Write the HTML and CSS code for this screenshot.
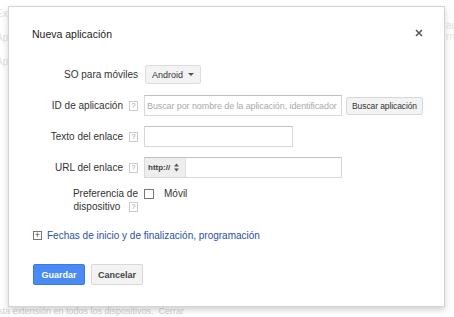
FILE: index.html
```html
<!DOCTYPE html>
<html lang="es">
<head>
  <meta charset="UTF-8">
  <title>Nueva aplicación</title>
  <link rel="stylesheet" href="styles.css">
</head>
<body>
  <div class="page">
    <div class="bg-line">Ext &nbsp; &nbsp; &nbsp; &nbsp; &nbsp; &nbsp; &nbsp; &nbsp; &nbsp; &nbsp; &nbsp; &nbsp; &nbsp; &nbsp; &nbsp; &nbsp; &nbsp; &nbsp; &nbsp; &nbsp; &nbsp; &nbsp; &nbsp; &nbsp; &nbsp; &nbsp; &nbsp; &nbsp; &nbsp; &nbsp; &nbsp; &nbsp; &nbsp; &nbsp; Fecha de inicio &nbsp; Estado</div>
    <div class="bg-line">Ap</div>
    <div class="bg-line">Ap</div>
    <div class="bg-right">ar<br>rru</div>
    <div class="bg-bottom">sta extensión en todos los dispositivos. &nbsp;Cerrar</div>
  </div>

  <div class="dialog">
    <div class="dialog-head">
      <span class="dialog-title">Nueva aplicación</span>
      <svg class="close" width="8" height="8" viewBox="0 0 8 8">
        <path d="M1 1L7 7M7 1L1 7" stroke="#555" stroke-width="1.5"/>
      </svg>
    </div>

    <div class="form">
      <div class="label">SO para móviles</div>
      <div class="field">
        <span class="dropdown">Android <span class="caret"></span></span>
      </div>

      <div class="label">ID de aplicación <span class="help">?</span></div>
      <div class="field">
        <input class="input wide" placeholder="Buscar por nombre de la aplicación, identificador">
        <button class="btn small">Buscar aplicación</button>
      </div>

      <div class="label">Texto del enlace <span class="help">?</span></div>
      <div class="field">
        <input class="input mid">
      </div>

      <div class="label">URL del enlace <span class="help">?</span></div>
      <div class="field">
        <div class="url">
          <span class="proto">http://
            <svg class="spin" width="5" height="9" viewBox="0 0 5 9">
              <path d="M0 3.5L2.5 0.5L5 3.5Z M0 5.5L2.5 8.5L5 5.5Z" fill="#555"/>
            </svg>
          </span>
          <input class="url-input">
        </div>
      </div>

      <div class="label two">Preferencia de<br>dispositivo <span class="help">?</span></div>
      <div class="field top">
        <span class="check"></span> Móvil
      </div>
    </div>

    <div class="expand">
      <span class="plus">+</span>
      <a href="#">Fechas de inicio y de finalización, programación</a>
    </div>

    <div class="actions">
      <button class="btn primary">Guardar</button>
      <button class="btn">Cancelar</button>
    </div>
  </div>
</body>
</html>
```

FILE: styles.css
```css
body {
  margin: 0;
  background: #fff;
  font-family: 'Liberation Sans', Arial, sans-serif;
  color: #222;
  width: 454px;
  height: 317px;
  overflow: hidden;
  position: relative;
}

.page {
  color: #e0e0e0;
  font-size: 10px;
  padding: 2px 0 0 0;
}

.bg-line {
  height: 24px;
  line-height: 24px;
  white-space: nowrap;
  margin-left: -4px;
}

.bg-right {
  position: absolute;
  left: 446px;
  top: 20px;
  line-height: 11px;
  color: #e4e4e4;
}

.bg-bottom {
  position: absolute;
  left: -2px;
  top: 306px;
  white-space: nowrap;
  font-size: 9px;
  color: #d0d0d0;
}

.dialog {
  position: absolute;
  left: 8px;
  top: 6px;
  width: 437px;
  height: 301px;
  box-sizing: border-box;
  background: #fff;
  border: 1px solid #d4d4d4;
  box-shadow: 0 3px 6px rgba(0, 0, 0, 0.18);
  padding: 0 0 0 23px;
}

.dialog-head {
  display: flex;
  justify-content: space-between;
  align-items: center;
  height: 16px;
  margin-top: 19px;
  padding-right: 21px;
}

.dialog-title {
  font-size: 10.5px;
}

.close {
  margin-top: -3px;
}

.form {
  display: grid;
  grid-template-columns: 106px auto;
  column-gap: 6px;
  row-gap: 10px;
  grid-auto-rows: 21px;
  margin-top: 22px;
  font-size: 10px;
}

.label {
  display: flex;
  align-items: center;
  justify-content: flex-end;
  text-align: right;
  color: #333;
  white-space: nowrap;
}

.label.two {
  display: block;
  line-height: 13px;
  margin-top: -1px;
}

.help {
  display: inline-block;
  width: 7px;
  height: 8px;
  line-height: 8px;
  border: 1px solid #ccc;
  font-size: 7px;
  color: #999;
  text-align: center;
  margin-left: 6px;
  vertical-align: middle;
}

.field {
  display: flex;
  align-items: center;
  gap: 4px;
  color: #333;
}

.field.top {
  align-items: flex-start;
}

.dropdown {
  display: inline-flex;
  align-items: center;
  height: 19px;
  margin-left: 1px;
  padding: 0 6px;
  background: #f3f3f3;
  border: 1px solid #dcdcdc;
  border-radius: 2px;
  font-size: 9px;
  color: #333;
  box-sizing: border-box;
}

.caret {
  display: inline-block;
  margin-left: 5px;
  border-left: 3px solid transparent;
  border-right: 3px solid transparent;
  border-top: 3px solid #555;
}

.input {
  height: 21px;
  box-sizing: border-box;
  border: 1px solid #d9d9d9;
  border-top-color: #c0c0c0;
  font-family: inherit;
  font-size: 9px;
  letter-spacing: -0.1px;
  padding: 0 2px;
  margin: 0;
  outline: none;
}

.input::placeholder {
  color: #aaa;
}

.input.wide {
  width: 198px;
}

.input.mid {
  width: 149px;
}

.btn {
  height: 22px;
  padding: 0 9px;
  border: 1px solid #d8d8d8;
  border-radius: 2px;
  background: #f3f3f3;
  color: #444;
  font-family: inherit;
  font-size: 9px;
  font-weight: bold;
  cursor: pointer;
}

.btn.small {
  width: 77px;
  height: 18px;
  padding: 0;
  font-weight: normal;
  font-size: 8.5px;
  color: #333;
  letter-spacing: -0.1px;
}

.url {
  display: flex;
  height: 21px;
  width: 198px;
  box-sizing: border-box;
  border: 1px solid #d9d9d9;
  border-top-color: #c0c0c0;
}

.proto {
  display: flex;
  align-items: center;
  gap: 4px;
  width: 41px;
  box-sizing: border-box;
  background: #eee;
  border-right: 1px solid #ddd;
  padding: 0 3px;
  font-size: 8px;
  font-weight: bold;
  color: #444;
}

.url-input {
  flex: 1;
  border: none;
  outline: none;
  min-width: 0;
}

.check {
  display: inline-block;
  width: 8px;
  height: 8px;
  border: 1px solid #777;
  margin-right: 6px;
  margin-top: 1px;
}

.expand {
  display: flex;
  align-items: center;
  margin-top: 21px;
  font-size: 10px;
}

.plus {
  display: inline-block;
  width: 7px;
  height: 7px;
  line-height: 7px;
  border: 1px solid #777;
  font-size: 9px;
  text-align: center;
  color: #444;
  margin-left: 1px;
  margin-right: 5px;
}

.expand a {
  color: #2a4fa8;
  text-decoration: none;
}

.actions {
  display: flex;
  gap: 6px;
  margin-top: 23px;
  padding-left: 1px;
}

.actions .btn {
  width: 52px;
  height: 21px;
  padding: 0;
}

.btn.primary {
  background: #4a8af4;
  border-color: #3b7ae0;
  color: #fff;
}
```
